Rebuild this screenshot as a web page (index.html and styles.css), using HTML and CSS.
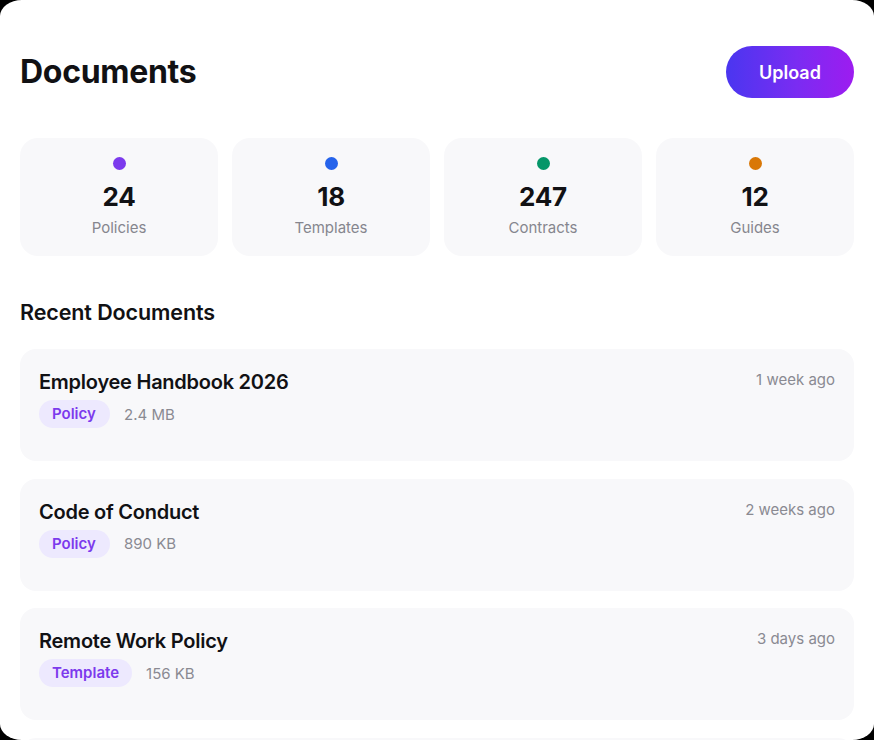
FILE: index.html
```html
<!DOCTYPE html>
<html lang="en">
<head>
<meta charset="utf-8">
<title>Documents</title>
<link rel="stylesheet" href="styles.css">
</head>
<body>
<div class="screen">
  <header class="header">
    <h1 class="title">Documents</h1>
    <button class="upload">Upload</button>
  </header>

  <section class="stats">
    <div class="stat">
      <span class="dot dot-purple"></span>
      <span class="stat-num">24</span>
      <span class="stat-label">Policies</span>
    </div>
    <div class="stat">
      <span class="dot dot-blue"></span>
      <span class="stat-num">18</span>
      <span class="stat-label">Templates</span>
    </div>
    <div class="stat">
      <span class="dot dot-green"></span>
      <span class="stat-num">247</span>
      <span class="stat-label">Contracts</span>
    </div>
    <div class="stat">
      <span class="dot dot-orange"></span>
      <span class="stat-num">12</span>
      <span class="stat-label">Guides</span>
    </div>
  </section>

  <h2 class="section-title">Recent Documents</h2>

  <section class="docs">
    <article class="doc">
      <div class="doc-main">
        <h3 class="doc-title">Employee Handbook 2026</h3>
        <div class="doc-meta">
          <span class="badge">Policy</span>
          <span class="size">2.4 MB</span>
        </div>
      </div>
      <span class="time">1 week ago</span>
    </article>
    <article class="doc">
      <div class="doc-main">
        <h3 class="doc-title">Code of Conduct</h3>
        <div class="doc-meta">
          <span class="badge">Policy</span>
          <span class="size">890 KB</span>
        </div>
      </div>
      <span class="time">2 weeks ago</span>
    </article>
    <article class="doc">
      <div class="doc-main">
        <h3 class="doc-title">Remote Work Policy</h3>
        <div class="doc-meta">
          <span class="badge">Template</span>
          <span class="size">156 KB</span>
        </div>
      </div>
      <span class="time">3 days ago</span>
    </article>
    <div class="doc doc-peek"></div>
  </section>
</div>
</body>
</html>
```

FILE: styles.css
```css
html, body {
  margin: 0;
  padding: 0;
  background: #000;
  height: 100%;
}

body {
  font-family: Inter, "Noto Sans", "Liberation Sans", sans-serif;
  color: #111114;
}

.screen {
  width: 874px;
  height: 740px;
  background: #fff;
  border-radius: 22px / 16px;
  overflow: hidden;
  padding: 46px 20px 0 20px;
  box-sizing: border-box;
}

.header {
  display: flex;
  justify-content: space-between;
  align-items: center;
  height: 52px;
}

.title {
  margin: 0;
  font-size: 32px;
  font-weight: 700;
  letter-spacing: -0.3px;
  line-height: 40px;
}

.upload {
  border: none;
  height: 52px;
  width: 128px;
  border-radius: 26px;
  background: linear-gradient(90deg, #4a36f0 0%, #7a2cf2 55%, #9d1cf0 100%);
  color: #fff;
  font-family: inherit;
  font-size: 18px;
  font-weight: 600;
  cursor: pointer;
}

.stats {
  display: grid;
  grid-template-columns: repeat(4, 1fr);
  gap: 14px;
  margin-top: 40px;
}

.stat {
  background: #f8f8fa;
  border-radius: 18px;
  height: 118px;
  display: flex;
  flex-direction: column;
  align-items: center;
  padding-top: 19px;
  box-sizing: border-box;
}

.dot {
  width: 13px;
  height: 13px;
  border-radius: 50%;
}
.dot-purple { background: #7c3aed; }
.dot-blue { background: #2563eb; }
.dot-green { background: #059669; }
.dot-orange { background: #d97706; }

.stat-num {
  margin-top: 10px;
  font-size: 26px;
  font-weight: 700;
  line-height: 34px;
  letter-spacing: -0.3px;
}

.stat-label {
  margin-top: 4px;
  font-size: 15px;
  line-height: 20px;
  color: #86868e;
}

.section-title {
  margin: 42px 0 0 0;
  font-size: 21.5px;
  font-weight: 600;
  line-height: 28px;
  letter-spacing: -0.1px;
}

.docs {
  display: flex;
  flex-direction: column;
  gap: 17.5px;
  margin-top: 23px;
}

.doc {
  background: #f8f8fa;
  border-radius: 16px;
  height: 112px;
  box-sizing: border-box;
  padding: 19px 19px 0 19px;
  display: flex;
  justify-content: space-between;
  align-items: flex-start;
  flex-shrink: 0;
}

.doc-title {
  margin: 0;
  font-size: 20px;
  font-weight: 600;
  line-height: 28px;
  letter-spacing: -0.25px;
}

.doc-meta {
  display: flex;
  align-items: center;
  gap: 14px;
  margin-top: 4px;
}

.badge {
  background: #ede9fe;
  color: #7c3aed;
  font-size: 15px;
  font-weight: 600;
  line-height: 28px;
  padding: 0 13px;
  border-radius: 14px;
  min-width: 45px;
}

.size {
  font-size: 15px;
  color: #8a8a92;
}

.time {
  font-size: 15px;
  color: #8a8a92;
  line-height: 22px;
  margin-top: 1px;
}
```
